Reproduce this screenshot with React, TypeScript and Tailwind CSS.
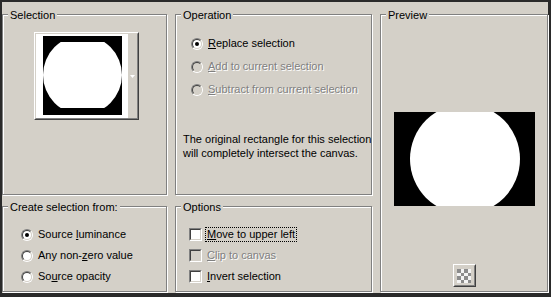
import React from "react";

const FONT = { fontFamily: '"Liberation Sans", Arial, sans-serif' };

function Group({
  label,
  className = "",
  children,
}: {
  label: string;
  className?: string;
  children?: React.ReactNode;
}) {
  return (
    <div
      className={`relative border border-[#808080] shadow-[inset_1px_1px_0_#fff,1px_1px_0_#fff] ${className}`}
    >
      <span className="absolute left-[5px] top-[-6px] whitespace-nowrap bg-[#d4d0c8] px-[2px] text-[11px] leading-[13px] text-black">
        {label}
      </span>
      {children}
    </div>
  );
}

function Radio({ checked = false, disabled = false }: { checked?: boolean; disabled?: boolean }) {
  return (
    <span className="inline-flex h-[12px] w-[12px] shrink-0 rounded-full border border-t-[#808080] border-l-[#808080] border-r-white border-b-white">
      <span
        className={`flex h-[10px] w-[10px] items-center justify-center rounded-full border border-t-[#404040] border-l-[#404040] border-r-[#d4d0c8] border-b-[#d4d0c8] ${
          disabled ? "bg-[#d4d0c8]" : "bg-white"
        }`}
      >
        {checked && <span className="h-[4px] w-[4px] rounded-full bg-black" />}
      </span>
    </span>
  );
}

function Check({ disabled = false }: { disabled?: boolean }) {
  return (
    <span className="inline-flex h-[13px] w-[13px] shrink-0 border border-t-[#808080] border-l-[#808080] border-r-white border-b-white">
      <span
        className={`block h-[11px] w-[11px] border border-t-[#404040] border-l-[#404040] border-r-[#d4d0c8] border-b-[#d4d0c8] ${
          disabled ? "bg-[#d4d0c8]" : "bg-white"
        }`}
      />
    </span>
  );
}

function Label({ children, disabled = false, focus = false }: { children: React.ReactNode; disabled?: boolean; focus?: boolean }) {
  return (
    <span
      className={`whitespace-nowrap text-[11px] leading-[13px] ${
        disabled ? "text-[#808080] [text-shadow:1px_1px_0_#fff]" : "text-black"
      } ${focus ? "outline outline-1 outline-dotted outline-black outline-offset-0 px-[1px]" : ""}`}
    >
      {children}
    </span>
  );
}

export default function App() {
  return (
    <div
      className="h-[297px] w-[551px] bg-[#2a2a2a] pb-[4px] pl-[2px] pr-[3px] pt-[2px]"
      style={FONT}
    >
      <div className="grid h-[291px] w-[546px] grid-cols-[165px_197px_168px] grid-rows-[181px_86px] gap-x-[8px] gap-y-[11px] bg-[#d4d0c8] pt-[12px]">
        {/* Selection */}
        <Group label="Selection">
          <div className="ml-[31px] mt-[17px] flex h-[88px] w-[105px] border border-t-white border-l-white border-r-[#404040] border-b-[#404040]">
            <div className="flex h-full w-full border border-t-[#d4d0c8] border-l-[#d4d0c8] border-r-[#808080] border-b-[#808080]">
              <div className="flex w-[92px] items-start justify-start bg-white pl-[7px] pt-[2px]">
                <svg width="79" height="79" viewBox="0 0 79 79">
                  <defs>
                    <clipPath id="thumbclip">
                      <rect x="0" y="6" width="79" height="66" />
                    </clipPath>
                  </defs>
                  <rect x="0" y="0" width="79" height="79" fill="#000" />
                  <circle cx="39.5" cy="39" r="39.5" fill="#fff" clipPath="url(#thumbclip)" />
                </svg>
              </div>
              <div className="flex flex-1 items-center justify-center">
                <svg width="5" height="3" viewBox="0 0 5 3">
                  <polygon points="0,0 5,0 2.5,3" fill="#fff" />
                </svg>
              </div>
            </div>
          </div>
        </Group>

        {/* Operation */}
        <Group label="Operation">
          <div className="flex flex-col pl-[15px] pt-[17px]">
            <div className="flex h-[23px] items-center gap-[5px]">
              <Radio checked />
              <Label>
                <u>R</u>eplace selection
              </Label>
            </div>
            <div className="flex h-[23px] items-center gap-[5px]">
              <Radio disabled />
              <Label disabled>
                <u>A</u>dd to current selection
              </Label>
            </div>
            <div className="flex h-[23px] items-center gap-[5px]">
              <Radio disabled />
              <Label disabled>
                <u>S</u>ubtract from current selection
              </Label>
            </div>
          </div>
          <p className="ml-[7px] mt-[31px] whitespace-nowrap text-[11px] leading-[14px] text-black">
            The original rectangle for this selection
            <br />
            will completely intersect the canvas.
          </p>
        </Group>

        {/* Preview */}
        <Group label="Preview" className="row-span-2">
          <div className="flex flex-col items-center pt-[97px]">
            <svg width="141" height="94" viewBox="0 0 141 94">
              <rect x="0" y="0" width="141" height="94" fill="#000" />
              <circle cx="71" cy="47" r="55" fill="#fff" />
            </svg>
            <div className="mt-[58px] flex h-[23px] w-[23px] items-center justify-center border border-t-white border-l-white border-r-[#404040] border-b-[#404040]">
              <div className="flex h-full w-full items-center justify-center border border-t-[#d4d0c8] border-l-[#d4d0c8] border-r-[#808080] border-b-[#808080]">
                <svg width="14" height="14" viewBox="0 0 4 4" shapeRendering="crispEdges">
                  <rect x="0" y="0" width="4" height="4" fill="#f4f4f4" />
                  <rect x="0" y="0" width="1" height="1" fill="#8c8c8c" />
                  <rect x="2" y="0" width="1" height="1" fill="#8c8c8c" />
                  <rect x="1" y="1" width="1" height="1" fill="#8c8c8c" />
                  <rect x="3" y="1" width="1" height="1" fill="#8c8c8c" />
                  <rect x="0" y="2" width="1" height="1" fill="#8c8c8c" />
                  <rect x="2" y="2" width="1" height="1" fill="#8c8c8c" />
                  <rect x="1" y="3" width="1" height="1" fill="#8c8c8c" />
                  <rect x="3" y="3" width="1" height="1" fill="#8c8c8c" />
                </svg>
              </div>
            </div>
          </div>
        </Group>

        {/* Create selection from */}
        <Group label="Create selection from:">
          <div className="flex flex-col pl-[18px] pt-[17px]">
            <div className="flex h-[21px] items-center gap-[5px]">
              <Radio checked />
              <Label>
                Source <u>l</u>uminance
              </Label>
            </div>
            <div className="flex h-[21px] items-center gap-[5px]">
              <Radio />
              <Label>
                Any non-<u>z</u>ero value
              </Label>
            </div>
            <div className="flex h-[21px] items-center gap-[5px]">
              <Radio />
              <Label>
                So<u>u</u>rce opacity
              </Label>
            </div>
          </div>
        </Group>

        {/* Options */}
        <Group label="Options">
          <div className="flex flex-col pl-[13px] pt-[17px]">
            <div className="flex h-[21px] items-center gap-[4px]">
              <Check />
              <Label focus>
                <u>M</u>ove to upper left
              </Label>
            </div>
            <div className="flex h-[21px] items-center gap-[5px]">
              <Check disabled />
              <Label disabled>
                <u>C</u>lip to canvas
              </Label>
            </div>
            <div className="flex h-[21px] items-center gap-[5px]">
              <Check />
              <Label>
                <u>I</u>nvert selection
              </Label>
            </div>
          </div>
        </Group>
      </div>
    </div>
  );
}
